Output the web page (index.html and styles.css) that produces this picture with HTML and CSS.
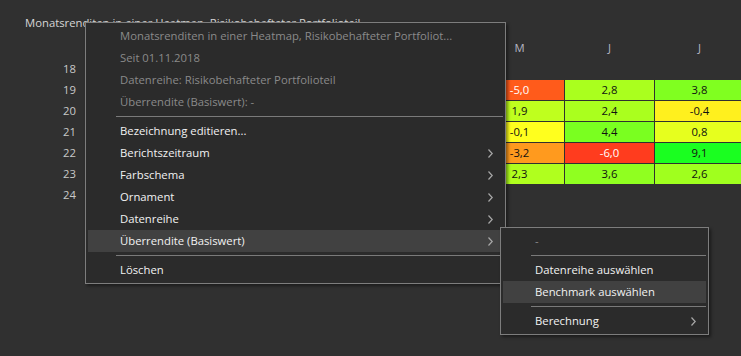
FILE: index.html
```html
<!DOCTYPE html>
<html lang="de">
<head>
    <meta charset="UTF-8">
    <meta name="viewport" content="width=device-width, initial-scale=1.0">
    <title>Monatsrenditen Heatmap</title>
    <link rel="stylesheet" href="styles.css">
</head>
<body>

    <!-- Heatmap Panel -->
    <div class="panel">
        <div class="panel-title">Monatsrenditen in einer Heatmap, Risikobehafteter Portfolioteil</div>

        <div class="heatmap">
            <div class="corner"></div>
            <div class="month">J</div><div class="month">F</div><div class="month">M</div><div class="month">A</div>
            <div class="month">M</div><div class="month">J</div><div class="month">J</div><div class="month">A</div>
            <div class="month">S</div><div class="month">O</div><div class="month">N</div><div class="month">D</div>

            <div class="year">18</div>
            <div></div><div></div><div></div><div></div><div></div><div></div>
            <div></div><div></div><div></div><div></div>
            <div class="cell" style="background:#e8ff1e">0,9</div>
            <div class="cell neg" style="background:#ff2a1e">-8,4</div>

            <div class="year">19</div>
            <div class="cell" style="background:#52ff20">6,1</div>
            <div class="cell" style="background:#a2ff1e">3,0</div>
            <div class="cell" style="background:#a8ff1e">2,9</div>
            <div class="cell" style="background:#a4ff1e">3,0</div>
            <div class="cell neg" style="background:#ff5b1b">-5,0</div>
            <div class="cell" style="background:#aaff1e">2,8</div>
            <div class="cell" style="background:#80ff20">3,8</div>
            <div class="cell" style="background:#d6ff1e">1,2</div>
            <div class="cell" style="background:#ecff1e">0,6</div>
            <div class="cell" style="background:#c4ff1e">1,7</div>
            <div class="cell" style="background:#a8ff1e">2,9</div>
            <div class="cell" style="background:#b8ff1e">2,1</div>

            <div class="year">20</div>
            <div class="cell" style="background:#eaff1e">0,7</div>
            <div class="cell" style="background:#ffb01e">-2,6</div>
            <div class="cell neg" style="background:#ff1e1e">-12,4</div>
            <div class="cell" style="background:#1aff20">10,2</div>
            <div class="cell" style="background:#bfff1e">1,9</div>
            <div class="cell" style="background:#aaff1e">2,4</div>
            <div class="cell" style="background:#fff01e">-0,4</div>
            <div class="cell" style="background:#b4ff1e">2,2</div>
            <div class="cell" style="background:#ffd41e">-1,4</div>
            <div class="cell" style="background:#ffc81e">-1,8</div>
            <div class="cell" style="background:#2aff20">8,6</div>
            <div class="cell" style="background:#aeff1e">2,5</div>

            <div class="year">21</div>
            <div class="cell" style="background:#f4ff1e">0,3</div>
            <div class="cell" style="background:#c8ff1e">1,6</div>
            <div class="cell" style="background:#72ff20">4,6</div>
            <div class="cell" style="background:#8cff20">3,4</div>
            <div class="cell" style="background:#ffff1e">-0,1</div>
            <div class="cell" style="background:#7aff20">4,4</div>
            <div class="cell" style="background:#e6ff1e">0,8</div>
            <div class="cell" style="background:#9cff1e">3,1</div>
            <div class="cell" style="background:#ffa41e">-3,0</div>
            <div class="cell" style="background:#6cff20">4,9</div>
            <div class="cell" style="background:#e2ff1e">1,0</div>
            <div class="cell" style="background:#88ff20">3,5</div>

            <div class="year">22</div>
            <div class="cell" style="background:#ff9a1e">-3,4</div>
            <div class="cell" style="background:#ffbc1e">-2,2</div>
            <div class="cell" style="background:#dcff1e">1,1</div>
            <div class="cell neg" style="background:#ff641e">-4,8</div>
            <div class="cell" style="background:#ff9a1e">-3,2</div>
            <div class="cell neg" style="background:#ff3c1e">-6,0</div>
            <div class="cell" style="background:#1aff20">9,1</div>
            <div class="cell" style="background:#ffb41e">-2,5</div>
            <div class="cell neg" style="background:#ff401e">-6,8</div>
            <div class="cell" style="background:#5eff20">5,4</div>
            <div class="cell" style="background:#7cff20">4,2</div>
            <div class="cell" style="background:#ffa01e">-3,1</div>

            <div class="year">23</div>
            <div class="cell" style="background:#5cff20">5,5</div>
            <div class="cell" style="background:#f0ff1e">0,4</div>
            <div class="cell" style="background:#d2ff1e">1,3</div>
            <div class="cell" style="background:#d8ff1e">1,1</div>
            <div class="cell" style="background:#b0ff1e">2,3</div>
            <div class="cell" style="background:#90ff20">3,6</div>
            <div class="cell" style="background:#a0ff1e">2,6</div>
            <div class="cell" style="background:#ffe21e">-0,9</div>
            <div class="cell" style="background:#ffb41e">-2,4</div>
            <div class="cell" style="background:#ffb01e">-2,7</div>
            <div class="cell" style="background:#36ff20">7,9</div>
            <div class="cell" style="background:#7eff20">4,1</div>

            <div class="year">24</div>
            <div class="cell" style="background:#beff1e">1,9</div>
            <div class="cell" style="background:#8eff20">3,5</div>
            <div class="cell" style="background:#9cff1e">3,1</div>
            <div class="cell" style="background:#ffd21e">-1,5</div>
            <div></div><div></div><div></div><div></div>
            <div></div><div></div><div></div><div></div>
        </div>
    </div>

    <!-- Context Menu -->
    <div class="menu main-menu">
        <div class="item disabled">Monatsrenditen in einer Heatmap, Risikobehafteter Portfoliot...</div>
        <div class="item disabled">Seit 01.11.2018</div>
        <div class="item disabled">Datenreihe: Risikobehafteter Portfolioteil</div>
        <div class="item disabled">Überrendite (Basiswert): -</div>
        <div class="separator"></div>
        <div class="item">Bezeichnung editieren...</div>
        <div class="item">Berichtszeitraum
            <svg class="arrow" width="5" height="9" viewBox="0 0 5 9"><path d="M0.5 0.5 L4.2 4.5 L0.5 8.5" /></svg>
        </div>
        <div class="item">Farbschema
            <svg class="arrow" width="5" height="9" viewBox="0 0 5 9"><path d="M0.5 0.5 L4.2 4.5 L0.5 8.5" /></svg>
        </div>
        <div class="item">Ornament
            <svg class="arrow" width="5" height="9" viewBox="0 0 5 9"><path d="M0.5 0.5 L4.2 4.5 L0.5 8.5" /></svg>
        </div>
        <div class="item">Datenreihe
            <svg class="arrow" width="5" height="9" viewBox="0 0 5 9"><path d="M0.5 0.5 L4.2 4.5 L0.5 8.5" /></svg>
        </div>
        <div class="item active">Überrendite (Basiswert)
            <svg class="arrow" width="5" height="9" viewBox="0 0 5 9"><path d="M0.5 0.5 L4.2 4.5 L0.5 8.5" /></svg>
        </div>
        <div class="separator"></div>
        <div class="item">Löschen</div>
    </div>

    <!-- Submenu -->
    <div class="menu sub-menu">
        <div class="item disabled">-</div>
        <div class="separator"></div>
        <div class="item">Datenreihe auswählen</div>
        <div class="item active">Benchmark auswählen</div>
        <div class="separator"></div>
        <div class="item">Berechnung
            <svg class="arrow" width="5" height="9" viewBox="0 0 5 9"><path d="M0.5 0.5 L4.2 4.5 L0.5 8.5" /></svg>
        </div>
    </div>

</body>
</html>
```

FILE: styles.css
```css
body {
    margin: 0;
    padding: 0;
    background: #303030;
    font-family: 'Open Sans', 'Noto Sans', sans-serif;
    font-size: 11.3px;
    color: #d6d6d6;
    overflow: hidden;
}

.panel {
    padding-top: 15px;
}

.panel-title {
    padding-left: 25px;
    line-height: 16px;
    white-space: nowrap;
}

.heatmap {
    display: grid;
    grid-template-columns: 114px repeat(12, 89px);
    grid-auto-rows: 20px;
    gap: 1px;
    margin-top: 7px;
    width: max-content;
}

.month {
    text-align: center;
    line-height: 20px;
    color: #b4b4c0;
}

.year {
    text-align: right;
    padding-right: 38px;
    line-height: 20px;
    color: #c8c8c8;
}

.cell {
    text-align: center;
    line-height: 20px;
    color: #111;
}

.cell.neg {
    color: #fff;
}

/* context menus */
.menu {
    position: absolute;
    box-sizing: border-box;
    background: #2b2b2b;
    border: 1px solid #7d7d7d;
    padding: 2px;
    box-shadow: 2px 2px 3px rgba(0, 0, 0, 0.45);
}

.main-menu {
    left: 85px;
    top: 22px;
    width: 421px;
}

.sub-menu {
    left: 500px;
    top: 227px;
    width: 209px;
}

.item {
    position: relative;
    height: 22px;
    line-height: 22px;
    padding-left: 32px;
    color: #f2f2f2;
    white-space: nowrap;
}

.item.disabled {
    color: #8a8a8a;
}

.item.active {
    background: #414141;
}

.separator {
    height: 1px;
    background: #7a7a7a;
    margin: 3px 0 3px 28px;
}

.arrow {
    position: absolute;
    right: 10px;
    top: 7px;
    fill: none;
    stroke: #a8a8a8;
    stroke-width: 1.2;
}
```
